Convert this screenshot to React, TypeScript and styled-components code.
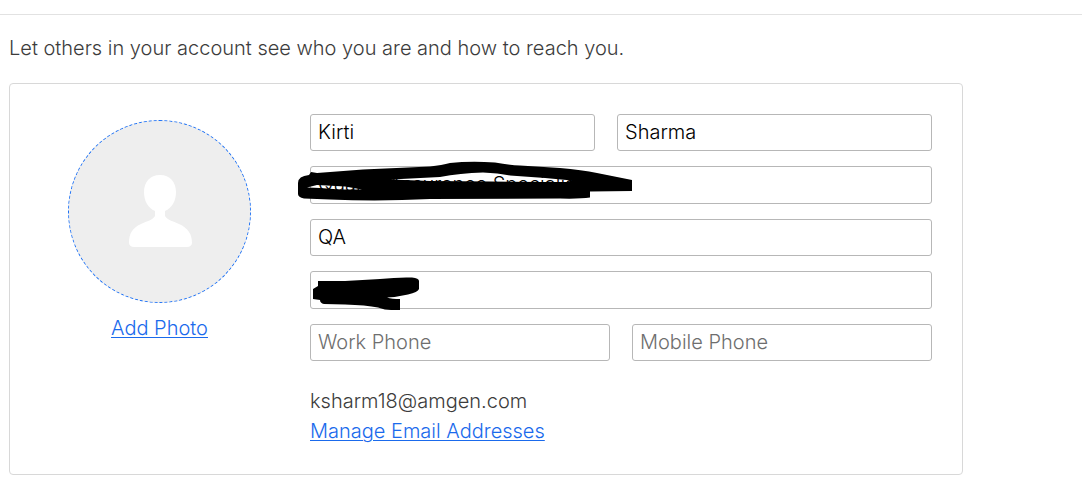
import React from "react";
import styled, { createGlobalStyle } from "styled-components";

const GlobalStyle = createGlobalStyle`
  *, *::before, *::after { box-sizing: border-box; }
  body {
    margin: 0;
    background: #fff;
    color: #3c3c3c;
    font-family: Inter, "Liberation Sans", sans-serif;
    font-size: 20px;
    font-weight: 300;
    line-height: 30px;
  }
`;

const Page = styled.main`
  padding-top: 14px;
`;

const Content = styled.section`
  border-top: 1px solid #e2e2e2;
  padding: 18px 9px 7px;
`;

const Intro = styled.p`
  margin: 0 0 20px;
`;

const Card = styled.form`
  display: flex;
  align-items: flex-start;
  gap: 59px;
  max-width: 954px;
  padding: 30px 30px 28px 58px;
  border: 1px solid #d8d8d8;
  border-radius: 4px;
`;

const PhotoColumn = styled.div`
  display: flex;
  flex-direction: column;
  align-items: center;
  gap: 10px;
  padding-top: 6px;
`;

const Avatar = styled.div`
  display: flex;
  align-items: center;
  justify-content: center;
  width: 183px;
  height: 183px;
  border: 1px dashed #1a6ff5;
  border-radius: 50%;
  background: #eee;
`;

const Link = styled.a`
  color: #1a6aec;
  text-decoration: underline;
  text-decoration-thickness: 1px;
  text-underline-offset: 2px;
`;

const Details = styled.div`
  flex: 1;
  min-width: 0;
  display: flex;
  flex-direction: column;
  gap: 15px;
`;

const Row = styled.div<{ $columns?: string }>`
  position: relative;
  display: grid;
  grid-template-columns: ${({ $columns }) => $columns ?? "1fr"};
  column-gap: 22px;
`;

const Field = styled.input<{ $tall?: boolean }>`
  width: 100%;
  min-width: 0;
  height: ${({ $tall }) => ($tall ? 38 : 37)}px;
  padding: 0 7px 2px;
  border: 1px solid #b7b7b7;
  border-radius: 3px;
  background: #fff;
  color: #000;
  font: inherit;
  outline: none;

  &::placeholder {
    color: #6e6e6e;
    opacity: 1;
  }
`;

const Scribble = styled.svg`
  position: absolute;
  left: -12px;
  top: -6px;
  pointer-events: none;
`;

const Email = styled.div`
  display: flex;
  flex-direction: column;
  align-items: flex-start;
  padding-top: 10px;
`;

export default function App() {
  return (
    <>
      <GlobalStyle />
      <Page>
        <Content>
          <Intro>Let others in your account see who you are and how to reach you.</Intro>
          <Card>
            <PhotoColumn>
              <Avatar>
                <svg width="65" height="73" viewBox="0 0 65 73" fill="#fff" aria-hidden="true">
                  <path d="M33 0C23 0 17 7 17 17c0 9 4 16 11 19v5c-2 4-8 5-14 8C5 53 2 59 2 68c0 2 2 4 5 4h53c3 0 5-2 5-4 0-9-4-15-13-19-6-3-12-4-14-8v-5c7-3 11-10 11-19C49 7 43 0 33 0Z" />
                </svg>
              </Avatar>
              <Link href="#photo">Add Photo</Link>
            </PhotoColumn>
            <Details>
              <Row $columns="285fr 315fr">
                <Field aria-label="First name" defaultValue="Kirti" />
                <Field aria-label="Last name" defaultValue="Sharma" />
              </Row>
              <Row>
                <Field $tall aria-label="Title" defaultValue="Quality Assurance Specialist" />
                <Scribble width="336" height="44" viewBox="298 160 336 44" aria-hidden="true">
                  <path
                    fillRule="evenodd"
                    d="M298 183Q298 176 309 175L311 172L317 173L363 169.500L430 166.500Q442 165 450 163Q470 161 495 162.500Q510 165 520 165.500L560 168Q582 170 597 173L632 180V191L590 191.500V197.500Q580 199 560 198.500L430 199Q380 201.500 330 199.500L304 198.500Q298 197 298 194Z
                    M307 187.500L317 185L345 186.500L362 189.500L340 189.500L320 188Z
                    M391 179.500L440 177Q460 173 483 172.500Q498 173 510 175.500L545 178L572 180.500L567 182H540L490 181.500L430 181Z"
                  />
                </Scribble>
              </Row>
              <Row>
                <Field aria-label="Company" defaultValue="QA" />
              </Row>
              <Row>
                <Field $tall aria-label="Location" />
                <Scribble width="124" height="46" viewBox="298 265 124 46" aria-hidden="true">
                  <path d="M318 281H345L380 279Q398 277 412 277.500Q419 278 419 281V289Q418 292 408 294.500Q397 297 387 297.500Q392 299 400 299V310H391Q385 310 378 307.500Q366 305 345 304.500L324 304Q320 303 320 300L313 299V289L318 286Z" />
                </Scribble>
              </Row>
              <Row $columns="1fr 1fr">
                <Field type="tel" aria-label="Work Phone" placeholder="Work Phone" />
                <Field type="tel" aria-label="Mobile Phone" placeholder="Mobile Phone" />
              </Row>
              <Email>
                <span>ksharm18@amgen.com</span>
                <Link href="#emails">Manage Email Addresses</Link>
              </Email>
            </Details>
          </Card>
        </Content>
      </Page>
    </>
  );
}
